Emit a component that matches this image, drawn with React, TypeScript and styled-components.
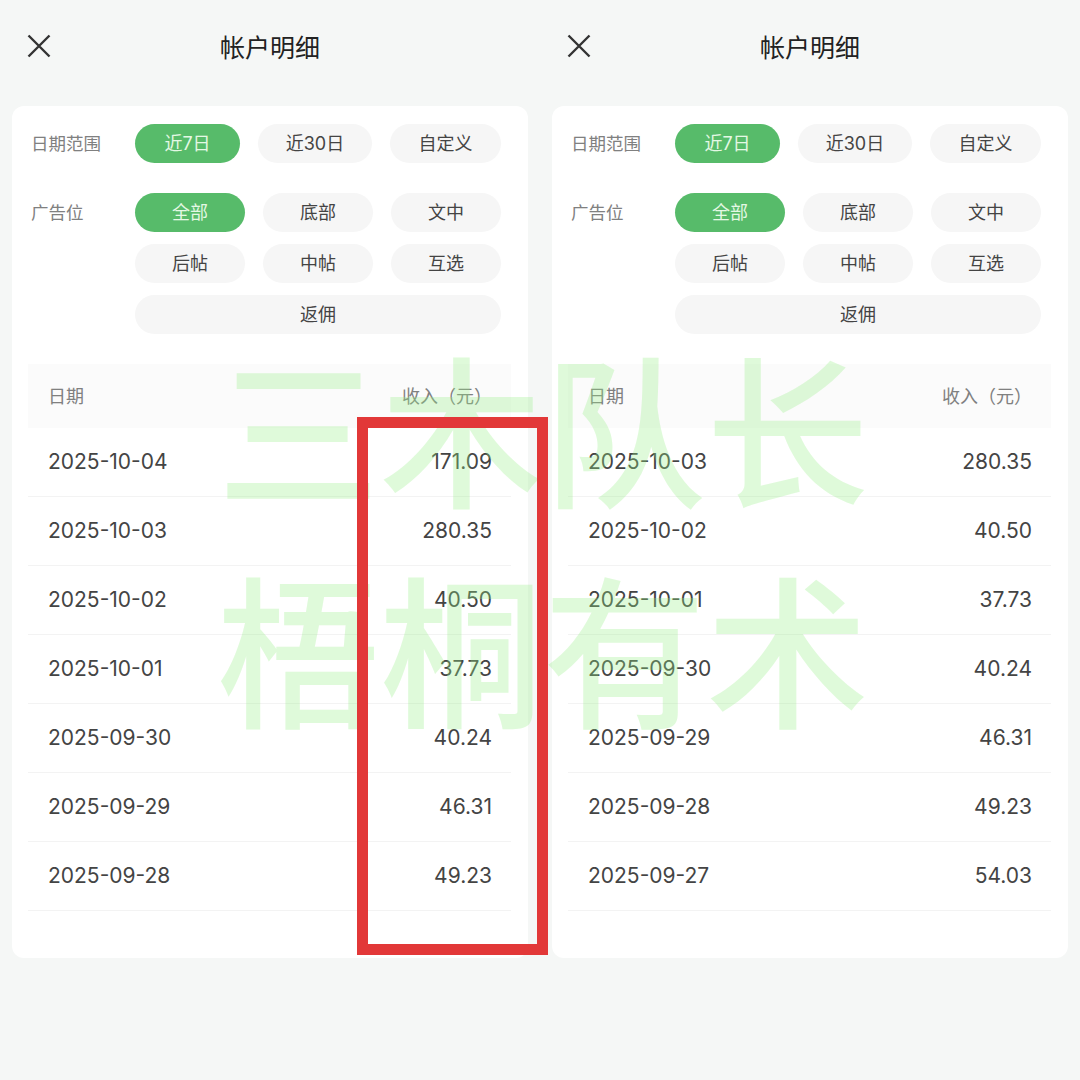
import styled, { createGlobalStyle } from 'styled-components';

const GlobalStyle = createGlobalStyle`
  html, body {
    margin: 0;
    padding: 0;
    background: #f5f7f6;
  }
  body {
    font-family: "Inter", "Noto Sans CJK SC", sans-serif;
  }
`;

const Page = styled.div`
  position: relative;
  width: 1080px;
  height: 1080px;
  overflow: hidden;
  display: flex;
  gap: 24px;
  padding: 0 12px;
  box-sizing: border-box;
  background: #f5f7f6;
`;

const Column = styled.div`
  width: 516px;
  flex: none;
`;

const Header = styled.div`
  position: relative;
  height: 106px;
  padding-top: 30px;
  box-sizing: border-box;
  text-align: center;
  font-size: 25px;
  line-height: 36px;
  color: #222;
`;

const CloseIcon = styled.svg`
  position: absolute;
  left: 15px;
  top: 34px;
  width: 24px;
  height: 24px;
`;

const Panel = styled.div`
  height: 852px;
  background: #fff;
  border-radius: 12px;
  padding: 18px 0 0 16px;
  box-sizing: border-box;
`;

const FilterRow = styled.div<{ $mb: number }>`
  display: flex;
  margin-bottom: ${(p) => p.$mb}px;
`;

const FilterLabel = styled.div`
  width: 107px;
  height: 39px;
  flex: none;
  padding-left: 3px;
  box-sizing: border-box;
  font-size: 17.5px;
  line-height: 40px;
  color: #808080;
`;

const ChipGrid = styled.div<{ $cols: string }>`
  display: grid;
  grid-template-columns: ${(p) => p.$cols};
  column-gap: 18px;
  row-gap: 12px;
`;

const Chip = styled.div<{ $active?: boolean; $wide?: boolean }>`
  height: 39px;
  border-radius: 20px;
  text-align: center;
  font-size: 18px;
  line-height: 40px;
  background: ${(p) => (p.$active ? '#57bb6a' : '#f6f6f6')};
  color: ${(p) => (p.$active ? '#e4f8e4' : '#444')};
  ${(p) => p.$wide && 'grid-column: 1 / -1;'}
`;

const Table = styled.div`
  margin-top: 30px;
  width: 483px;
`;

const TableHead = styled.div`
  display: flex;
  justify-content: space-between;
  height: 64px;
  padding: 0 19px 0 20px;
  box-sizing: border-box;
  background: #fbfbfb;
  font-size: 18px;
  line-height: 65px;
  color: #808080;
`;

const TableRow = styled.div`
  display: flex;
  justify-content: space-between;
  height: 69px;
  padding: 0 19px 0 20px;
  box-sizing: border-box;
  border-bottom: 1px solid #f3f3f3;
  font-size: 21px;
  line-height: 67px;
  color: #444;
`;

const Watermark = styled.div`
  position: absolute;
  left: 217px;
  top: 314px;
  width: 660px;
  font-family: "Noto Sans CJK SC", sans-serif;
  font-size: 163px;
  font-weight: 500;
  line-height: 220px;
  color: rgba(148, 238, 132, 0.3);
  white-space: nowrap;
  pointer-events: none;
`;

const RedBox = styled.div`
  position: absolute;
  left: 357px;
  top: 417px;
  width: 191px;
  height: 538px;
  border: 11px solid #e23838;
  box-sizing: border-box;
`;

const data = [
  [
    ['2025-10-04', '171.09'],
    ['2025-10-03', '280.35'],
    ['2025-10-02', '40.50'],
    ['2025-10-01', '37.73'],
    ['2025-09-30', '40.24'],
    ['2025-09-29', '46.31'],
    ['2025-09-28', '49.23'],
  ],
  [
    ['2025-10-03', '280.35'],
    ['2025-10-02', '40.50'],
    ['2025-10-01', '37.73'],
    ['2025-09-30', '40.24'],
    ['2025-09-29', '46.31'],
    ['2025-09-28', '49.23'],
    ['2025-09-27', '54.03'],
  ],
];

const App = () => {
  return (
    <Page>
      <GlobalStyle />
      {data.map((rows, i) => (
        <Column key={i}>
          <Header>
            <CloseIcon viewBox="0 0 24 24" fill="none" stroke="#333" strokeWidth="2.4">
              <path d="M1.5 1.5L22.5 22.5M22.5 1.5L1.5 22.5" />
            </CloseIcon>
            帐户明细
          </Header>
          <Panel>
            <FilterRow $mb={30}>
              <FilterLabel>日期范围</FilterLabel>
              <ChipGrid $cols="105px 114px 111px">
                <Chip $active>近7日</Chip>
                <Chip>近30日</Chip>
                <Chip>自定义</Chip>
              </ChipGrid>
            </FilterRow>
            <FilterRow $mb={0}>
              <FilterLabel>广告位</FilterLabel>
              <ChipGrid $cols="110px 110px 110px">
                <Chip $active>全部</Chip>
                <Chip>底部</Chip>
                <Chip>文中</Chip>
                <Chip>后帖</Chip>
                <Chip>中帖</Chip>
                <Chip>互选</Chip>
                <Chip $wide>返佣</Chip>
              </ChipGrid>
            </FilterRow>
            <Table>
              <TableHead>
                <span>日期</span>
                <span>收入（元）</span>
              </TableHead>
              {rows.map(([date, amount]) => (
                <TableRow key={date}>
                  <span>{date}</span>
                  <span>{amount}</span>
                </TableRow>
              ))}
            </Table>
          </Panel>
        </Column>
      ))}
      <Watermark>
        三木队长
        <br />
        梧桐有术
      </Watermark>
      <RedBox />
    </Page>
  );
};

export default App;
